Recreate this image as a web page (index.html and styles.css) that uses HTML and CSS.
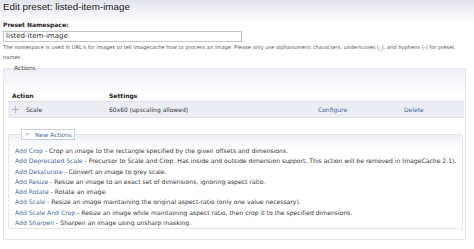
FILE: index.html
```html
<!DOCTYPE html>
<html>
<head>
<meta charset="utf-8">
<link rel="stylesheet" href="styles.css">
</head>
<body>
<div class="page">
  <h1 class="title">Edit preset: listed-item-image</h1>
  <div class="form-item">
    <label class="label">Preset Namespace:</label>
    <div class="input">listed-item-image</div>
    <div class="desc">The namespace is used in URL's for images to tell imagecache how to process an image. Please only use alphanumeric characters, underscores (_), and hyphens (-) for preset names.</div>
  </div>
  <fieldset class="fs actions">
    <legend class="legend">Actions</legend>
    <table class="tbl">
      <thead>
        <tr><th class="c-action">Action</th><th class="c-set">Settings</th><th class="c-conf"></th><th class="c-del"></th></tr>
      </thead>
      <tbody>
        <tr class="row">
          <td class="c-action"><span class="drag"><svg width="7" height="7" viewBox="0 0 7 7"><path d="M3.5 0v7M0 3.5h7" stroke="#b8b8c0" stroke-width="1"/></svg></span>Scale</td>
          <td class="c-set">60x60 (upscaling allowed)</td>
          <td class="c-conf"><a class="link">Configure</a></td>
          <td class="c-del"><a class="link">Delete</a></td>
        </tr>
      </tbody>
    </table>
    <fieldset class="fs new">
      <legend class="legend-box"><svg class="tri" width="5" height="5" viewBox="0 0 5 5"><path d="M0 1h5L2.5 4z" fill="#d0d0d8"/></svg><a class="link">New Actions</a></legend>
      <ul class="list">
        <li><a class="link">Add Crop</a> - Crop an image to the rectangle specified by the given offsets and dimensions.</li>
        <li><a class="link">Add Deprecated Scale</a> - Precursor to Scale and Crop. Has inside and outside dimension support. This action will be removed in ImageCache 2.1).</li>
        <li><a class="link">Add Desaturate</a> - Convert an image to grey scale.</li>
        <li><a class="link">Add Resize</a> - Resize an image to an exact set of dimensions, ignoring aspect ratio.</li>
        <li><a class="link">Add Rotate</a> - Rotate an image.</li>
        <li><a class="link">Add Scale</a> - Resize an image maintaining the original aspect-ratio (only one value necessary).</li>
        <li><a class="link">Add Scale And Crop</a> - Resize an image while maintaining aspect ratio, then crop it to the specified dimensions.</li>
        <li><a class="link">Add Sharpen</a> - Sharpen an image using unsharp masking.</li>
      </ul>
    </fieldset>
  </fieldset>
</div>
</body>
</html>
```
FILE: styles.css
```css
html, body {
  margin: 0;
  padding: 0;
  background: #fff;
}
.page {
  width: 474px;
  height: 249px;
  overflow: hidden;
  font-family: "DejaVu Sans", Verdana, sans-serif;
  color: #333;
  background: linear-gradient(#e4e4ec 0px, #f4f4f8 14px, #fff 26px);
  padding: 0 8px 0 3px;
  box-sizing: border-box;
}
.title {
  margin: 0;
  padding: 1px 0 0 0;
  font-family: "Liberation Sans", Arial, sans-serif;
  font-weight: normal;
  font-size: 9.8px;
  line-height: 12px;
  color: #222;
}
.form-item {
  padding-top: 8px;
}
.label {
  display: block;
  font-weight: bold;
  font-size: 6px;
  line-height: 8px;
  color: #222;
}
.input {
  margin-top: 2px;
  width: 239px;
  height: 11px;
  box-sizing: border-box;
  border: 1px solid #c4c4c4;
  font-size: 7px;
  line-height: 9px;
  padding-left: 2px;
  color: #333;
  background: #fff;
}
.desc {
  margin-top: 0px;
  font-size: 5.17px;
  line-height: 10px;
  color: #555;
}
.fs {
  margin: 0;
  border: 1px solid #e6e6ea;
  min-width: 0;
}
.actions {
  margin-top: 2px;
  height: 176px;
  box-sizing: border-box;
  padding: 18px 2px 0 4px;
  background: linear-gradient(#eeeef4 0px, #fff 26px);
}
.legend {
  font-size: 6px;
  line-height: 8px;
  padding: 0 1px;
  margin-left: 5px;
  color: #333;
}
.tbl {
  width: 456px;
  border-collapse: collapse;
  font-size: 6px;
  color: #333;
}
.tbl th {
  text-align: left;
  font-weight: bold;
  height: 11px;
  padding: 0;
  color: #222;
}
.tbl td {
  padding: 0;
  height: 15px;
}
.row {
  background: #ececf3;
  border-top: 1px solid #dedee8;
  border-bottom: 1px solid #dedee8;
}
.c-action { width: 97px; padding-left: 4px !important; }
.c-set { width: 209px; }
.c-conf { width: 86px; }
.drag {
  display: inline-block;
  width: 14px;
  vertical-align: -1px;
}
.link {
  color: #4a66a0;
  text-decoration: none;
}
.new {
  margin-top: 11px;
  padding: 6px 0 0 6px;
  height: 100px;
  box-sizing: border-box;
  width: 455px;
  background: linear-gradient(#f0f0f4 0px, #fff 14px);
}
.legend-box {
  margin-left: 6px;
  border: 1px solid #c8cfe0;
  background: #fff;
  padding: 0 2px 0 3px;
  font-size: 6px;
  line-height: 9px;
  display: flex;
  align-items: center;
}
.tri {
  margin-right: 5px;
}
.list {
  list-style: none;
  margin: 0;
  padding: 0;
  font-size: 6.1px;
  line-height: 10.3px;
  color: #333;
}
```
